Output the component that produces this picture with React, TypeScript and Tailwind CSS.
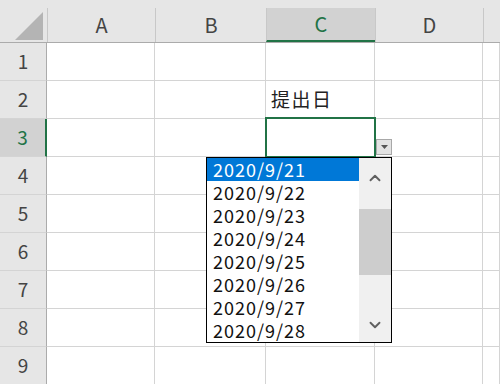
import { ChevronUp, ChevronDown } from "lucide-react";

const cols = [
  { name: "A", w: "w-[108px]" },
  { name: "B", w: "w-[111px]" },
  { name: "C", w: "w-[109px]" },
  { name: "D", w: "w-[108px]" },
  { name: "", w: "flex-1" },
];

const dates = [21, 22, 23, 24, 25, 26, 27, 28].map((d) => `2020/9/${d}`);

const font = "font-['Noto_Sans_CJK_JP','Liberation_Sans',sans-serif]";

export default function App() {
  return (
    <div className={`relative w-[500px] h-[384px] overflow-hidden bg-white ${font}`}>
      {/* Column headers */}
      <div className="flex h-[43px] bg-[#e6e6e6] border-b border-[#ababab]">
        <div className="w-[47px] flex items-end justify-end pr-[3px] pb-[2px]">
          <svg width="29" height="28" viewBox="0 0 29 28">
            <polygon points="28,0 28,28 0,28" fill="#b4b4b4" />
          </svg>
        </div>
        {cols.map((c) => (
          <div key={c.name + c.w} className={`${c.w} flex items-end`}>
            <div
              className={`h-[34px] w-full flex items-center justify-center text-[20px] border-l border-[#c8c8c8] ${
                c.name === "C"
                  ? "bg-[#d2d2d2] text-[#217346] border-b-2 border-b-[#217346]"
                  : "text-[#444]"
              }`}
            >
              {c.name}
            </div>
          </div>
        ))}
      </div>

      {/* Rows */}
      {Array.from({ length: 9 }, (_, i) => i + 1).map((r) => (
        <div key={r} className="flex h-[38px]">
          <div
            className={`w-[47px] flex items-center justify-center text-[19px] border-b border-[#d4d4d4] border-r ${
              r === 3
                ? "bg-[#d2d2d2] text-[#217346] border-r-2 border-r-[#217346]"
                : "bg-[#e6e6e6] text-[#444] border-r-[#ababab]"
            }`}
          >
            {r}
          </div>
          {cols.map((c) => (
            <div
              key={c.name + c.w}
              className={`${c.w} border-r border-b border-[#d4d4d4] flex items-center pl-[5px] text-[19px] tracking-[1.5px] text-[#222]`}
            >
              {r === 2 && c.name === "C" ? "提出日" : null}
            </div>
          ))}
        </div>
      ))}

      {/* Active cell */}
      <div className="absolute left-[265px] top-[117px] w-[111px] h-[41px] border-2 border-[#217346]" />

      {/* Dropdown arrow */}
      <div className="absolute left-[376px] top-[139px] w-[16px] h-[16px] bg-[#e3e3e3] border border-[#a8a8a8] flex items-center justify-center">
        <svg width="7" height="4" viewBox="0 0 7 4">
          <polygon points="0,0 7,0 3.5,4" fill="#555" />
        </svg>
      </div>

      {/* Dropdown list */}
      <div className="absolute left-[206px] top-[157px] w-[186px] h-[186px] border border-black bg-white flex">
        <div className="flex-1 flex flex-col">
          {dates.map((d, i) => (
            <div
              key={d}
              className={`h-[23px] flex items-center pl-[6px] text-[18px] leading-[23px] tracking-[1px] ${
                i === 0 ? "bg-[#0078d7] text-white" : "text-[#111]"
              }`}
            >
              {d}
            </div>
          ))}
        </div>
        <div className="w-[32px] bg-[#f0f0f0] flex flex-col">
          <div className="h-[40px] flex items-center justify-center">
            <ChevronUp size={18} strokeWidth={2.5} className="text-[#606060]" />
          </div>
          <div className="h-[11px]" />
          <div className="h-[66px] bg-[#cdcdcd]" />
          <div className="flex-1 flex items-end justify-center pb-[8px]">
            <ChevronDown size={18} strokeWidth={2.5} className="text-[#606060]" />
          </div>
        </div>
      </div>
    </div>
  );
}
